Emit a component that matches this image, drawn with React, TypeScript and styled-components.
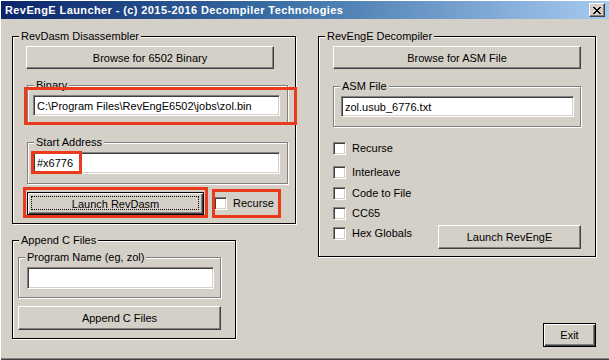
import React from 'react';
import styled, { createGlobalStyle } from 'styled-components';

const GlobalStyle = createGlobalStyle`
  html, body {
    margin: 0;
    padding: 0;
    background: #d4d0c8;
  }
  body {
    font-family: "Liberation Sans", Arial, sans-serif;
    font-size: 11px;
    color: #000;
  }
  * {
    box-sizing: border-box;
  }
`;

const Window = styled.div`
  position: relative;
  width: 609px;
  height: 360px;
  padding: 1px 0 0 1px;
  background: #d4d0c8;
  box-shadow: inset 1px 1px 0 #fff, inset 0 -1px 0 #404040, inset 0 -2px 0 #808080;
  overflow: hidden;
`;

const TitleBar = styled.div`
  height: 18px;
  display: flex;
  align-items: center;
  justify-content: space-between;
  padding: 0 4px 0 4px;
  background: linear-gradient(90deg, #0a246a 0%, #3a6ea5 45%, #a6caf0 100%);
  color: #fff;
  font-weight: bold;
  font-size: 11px;
  letter-spacing: 0.4px;
  white-space: nowrap;
`;

const CloseButton = styled.div`
  width: 16px;
  height: 14px;
  display: flex;
  align-items: center;
  justify-content: center;
  background: #d4d0c8;
  border: 1px solid;
  border-color: #fff #404040 #404040 #fff;
  box-shadow: inset -1px -1px 0 #808080;
`;

const Body = styled.div`
  display: flex;
  padding: 17px 0 0 11px;
`;

const Column = styled.div<{ $w: number; $ml?: number }>`
  display: flex;
  flex-direction: column;
  align-items: flex-start;
  width: ${(p) => p.$w}px;
  margin-left: ${(p) => p.$ml ?? 0}px;
`;

const Footer = styled.div`
  display: flex;
  justify-content: flex-end;
  align-self: stretch;
  margin-top: 66px;
`;

const Group = styled.div<{ $w: number; $h: number; $inner?: boolean; $mt?: number; $ml?: number }>`
  position: relative;
  flex-shrink: 0;
  display: flex;
  flex-direction: column;
  align-items: flex-start;
  width: ${(p) => p.$w}px;
  height: ${(p) => p.$h}px;
  margin: ${(p) => p.$mt ?? 0}px 0 0 ${(p) => p.$ml ?? 0}px;
  border: 1px solid ${(p) => (p.$inner ? '#808080' : '#000')};
  box-shadow: 1px 1px 0 #fff, inset 1px 1px 0 #fff;
`;

const GroupLabel = styled.span`
  position: absolute;
  top: -7px;
  left: 6px;
  padding: 0 2px;
  line-height: 13px;
  background: #d4d0c8;
  white-space: nowrap;
`;

const Button = styled.div<{ $w: number; $h: number; $mt?: number; $ml?: number; $default?: boolean; $focus?: boolean }>`
  position: relative;
  flex-shrink: 0;
  display: flex;
  align-items: center;
  justify-content: center;
  width: ${(p) => p.$w}px;
  height: ${(p) => p.$h}px;
  margin: ${(p) => p.$mt ?? 0}px 0 0 ${(p) => p.$ml ?? 0}px;
  background: #d4d0c8;
  white-space: nowrap;
  border: 1px solid;
  border-color: ${(p) => (p.$default ? '#000' : '#fff #404040 #404040 #fff')};
  box-shadow: ${(p) =>
    p.$default
      ? 'inset 1px 1px 0 #fff, inset -1px -1px 0 #404040, inset -2px -2px 0 #808080'
      : 'inset -1px -1px 0 #808080'};

  &::after {
    content: '';
    display: ${(p) => (p.$focus ? 'block' : 'none')};
    position: absolute;
    inset: 3px 4px 4px 3px;
    border: 1px dotted #000;
  }
`;

const TextBox = styled.div<{ $w: number; $h: number; $mt?: number; $ml?: number }>`
  flex-shrink: 0;
  display: flex;
  align-items: center;
  width: ${(p) => p.$w}px;
  height: ${(p) => p.$h}px;
  margin: ${(p) => p.$mt ?? 0}px 0 0 ${(p) => p.$ml ?? 0}px;
  padding: 0 0 0 3px;
  background: #fff;
  border: 1px solid;
  border-color: #808080 #fff #fff #808080;
  box-shadow: inset 1px 1px 0 #404040, inset -1px -1px 0 #d4d0c8;
  white-space: nowrap;
  overflow: hidden;
`;

const Row = styled.div<{ $mt?: number; $ml?: number; $gap?: number; $align?: string }>`
  display: flex;
  align-items: ${(p) => p.$align ?? 'center'};
  gap: ${(p) => p.$gap ?? 0}px;
  margin: ${(p) => p.$mt ?? 0}px 0 0 ${(p) => p.$ml ?? 0}px;
`;

const Check = styled.label<{ $mt?: number; $w?: number }>`
  display: flex;
  align-items: center;
  gap: 6px;
  height: 13px;
  line-height: 13px;
  margin-top: ${(p) => p.$mt ?? 0}px;
  width: ${(p) => (p.$w ? `${p.$w}px` : 'auto')};
  white-space: nowrap;
`;

const CheckBox = styled.span`
  flex-shrink: 0;
  width: 13px;
  height: 13px;
  background: #fff;
  border: 1px solid;
  border-color: #808080 #fff #fff #808080;
  box-shadow: inset 1px 1px 0 #404040, inset -1px -1px 0 #d4d0c8;
`;

// red annotation frames drawn over the dialog
const Callout = styled.div<{ $x: number; $y: number; $w: number; $h: number }>`
  position: absolute;
  left: ${(p) => p.$x}px;
  top: ${(p) => p.$y}px;
  width: ${(p) => p.$w}px;
  height: ${(p) => p.$h}px;
  border: 3px solid #ea3a1c;
  pointer-events: none;
`;

function CloseGlyph () {
  const rows: [number, number][][] = [
    [[0, 2], [6, 2]],
    [[1, 2], [5, 2]],
    [[2, 4]],
    [[3, 2]],
    [[2, 4]],
    [[1, 2], [5, 2]],
    [[0, 2], [6, 2]]
  ];

  return (
    <svg width='8' height='7' viewBox='0 0 8 7' shapeRendering='crispEdges'>
      {rows.map((r, y) => r.map(([x, w]) => (
        <rect key={`${y}-${x}`} x={x} y={y} width={w} height={1} fill='#000' />
      )))}
    </svg>
  );
}

function CheckItem ({ label, mt, w }: { label: string; mt?: number; w?: number }) {
  return (
    <Check $mt={mt} $w={w}>
      <CheckBox />
      <span>{label}</span>
    </Check>
  );
}

export default function App () {
  return (
    <Window>
      <GlobalStyle />
      <TitleBar>
        <span>RevEngE Launcher - (c) 2015-2016 Decompiler Technologies</span>
        <CloseButton><CloseGlyph /></CloseButton>
      </TitleBar>

      <Body>
        <Column $w={284}>
          <Group $w={284} $h={188}>
            <GroupLabel>RevDasm Disassembler</GroupLabel>
            <Button $w={248} $h={23} $mt={9} $ml={13}>Browse for 6502 Binary</Button>

            <Group $inner $w={261} $h={38} $mt={16} $ml={14}>
              <GroupLabel>Binary</GroupLabel>
              <TextBox $w={247} $h={21} $mt={9} $ml={5}>C:\Program Files\RevEngE6502\jobs\zol.bin</TextBox>
            </Group>

            <Group $inner $w={261} $h={42} $mt={19} $ml={14}>
              <GroupLabel>Start Address</GroupLabel>
              <TextBox $w={247} $h={22} $mt={9} $ml={5}>#x6776</TextBox>
            </Group>

            <Row $mt={8} $ml={14} $gap={10}>
              <Button $w={177} $h={23} $default $focus>Launch RevDasm</Button>
              <CheckItem label='Recurse' />
            </Row>
          </Group>

          <Group $w={224} $h={99} $mt={16}>
            <GroupLabel>Append C Files</GroupLabel>
            <Group $inner $w={203} $h={41} $mt={16} $ml={5}>
              <GroupLabel>Program Name (eg, zol)</GroupLabel>
              <TextBox $w={187} $h={22} $mt={9} $ml={8} />
            </Group>
            <Button $w={203} $h={24} $mt={8} $ml={5}>Append C Files</Button>
          </Group>
        </Column>

        <Column $w={278} $ml={22}>
          <Group $w={278} $h={221}>
            <GroupLabel>RevEngE Decompiler</GroupLabel>
            <Button $w={248} $h={23} $mt={9} $ml={14}>Browse for ASM File</Button>

            <Group $inner $w={248} $h={41} $mt={17} $ml={14}>
              <GroupLabel>ASM File</GroupLabel>
              <TextBox $w={233} $h={21} $mt={9} $ml={7}>zol.usub_6776.txt</TextBox>
            </Group>

            <Row $mt={15} $ml={14} $align='flex-start'>
              <CheckItem label='Recurse' />
            </Row>
            <Row $mt={11} $ml={14} $align='flex-start'>
              <CheckItem label='Interleave' />
            </Row>
            <Row $mt={8} $ml={14} $align='flex-start'>
              <CheckItem label='Code to File' />
            </Row>
            <Row $mt={7} $ml={14} $align='flex-start'>
              <CheckItem label='CC65' />
            </Row>
            <Row $mt={5} $ml={14} $align='flex-start'>
              <CheckItem label='Hex Globals' mt={2} w={105} />
              <Button $w={143} $h={24}>Launch RevEngE</Button>
            </Row>
          </Group>

          <Footer>
            <Button $w={53} $h={24} $default>Exit</Button>
          </Footer>
        </Column>
      </Body>

      <Callout $x={24} $y={87} $w={273} $h={38} />
      <Callout $x={31} $y={151} $w={51} $h={23} />
      <Callout $x={23} $y={187} $w={185} $h={31} />
      <Callout $x={212} $y={189} $w={69} $h={29} />
    </Window>
  );
}
